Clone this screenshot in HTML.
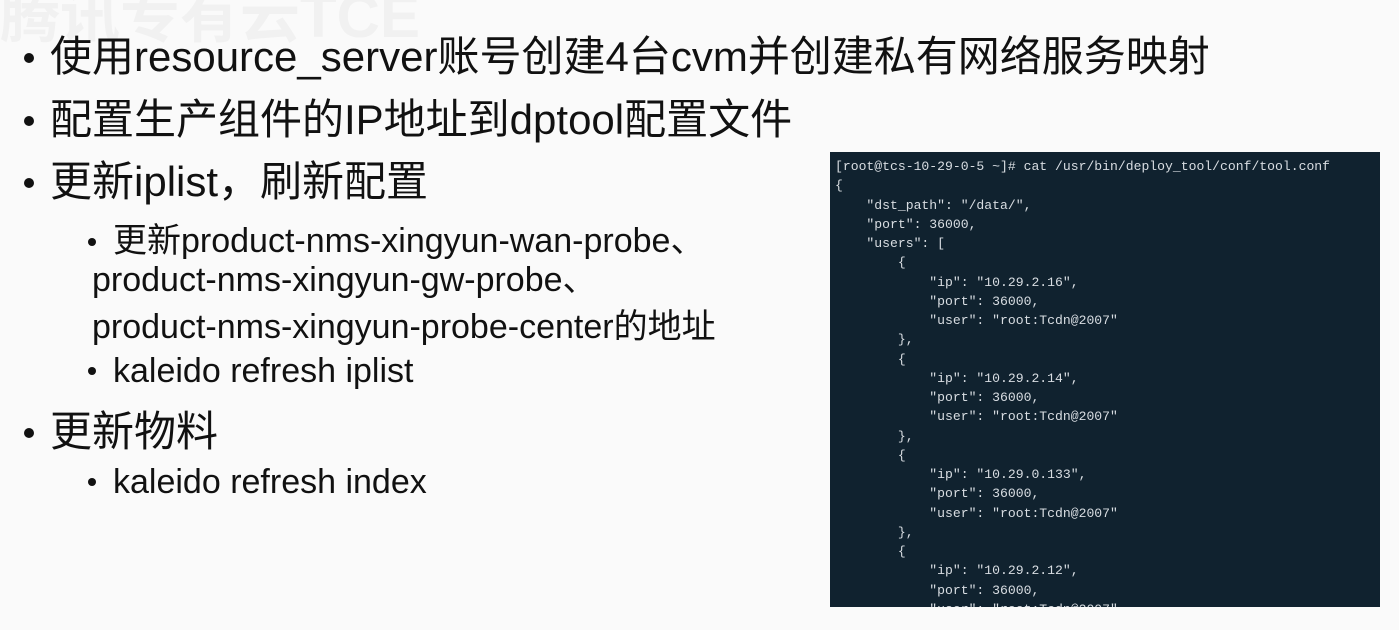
<!DOCTYPE html><html><head><meta charset="utf-8"><style>
body{margin:0;width:1399px;height:630px;background:#fafafa;overflow:hidden;position:relative;font-family:"Liberation Sans","Noto Sans CJK SC",sans-serif;color:#111}
.l{position:absolute;white-space:nowrap;line-height:1}
.m{font-size:42px;left:50px}
.s{font-size:34px}
.b{position:absolute;width:10px;height:10px;border-radius:50%;background:#111}
.sb{position:absolute;width:8px;height:8px;border-radius:50%;background:#111}
.wm{position:absolute;left:0;top:-32px;font-size:60px;color:#f1f1f1;font-weight:bold}
#t{position:absolute;left:830px;top:152px;width:550px;height:455px;background:#10222f;overflow:hidden}
#t pre{margin:0;padding:5px 0 0 5px;font-family:"Liberation Mono","DejaVu Sans Mono",monospace;font-size:13.1px;line-height:19.25px;color:#d8dde2}
</style></head><body>
<div class="wm">腾讯专有云TCE</div>
<div class="b" style="left:24px;top:53px"></div><div class="l m" style="top:36px">使用resource_server账号创建4台cvm并创建私有网络服务映射</div>
<div class="b" style="left:24px;top:116px"></div><div class="l m" style="top:99px">配置生产组件的IP地址到dptool配置文件</div>
<div class="b" style="left:24px;top:178px"></div><div class="l m" style="top:161px">更新iplist，刷新配置</div>
<div class="sb" style="left:88px;top:238px"></div><div class="l s" style="left:113px;top:224px">更新product-nms-xingyun-wan-probe、</div>
<div class="l s" style="left:92px;top:263px">product-nms-xingyun-gw-probe、</div>
<div class="l s" style="left:92px;top:310px">product-nms-xingyun-probe-center的地址</div>
<div class="sb" style="left:88px;top:367px"></div><div class="l s" style="left:113px;top:354px">kaleido refresh iplist</div>
<div class="b" style="left:24px;top:428px"></div><div class="l m" style="top:411px">更新物料</div>
<div class="sb" style="left:88px;top:478px"></div><div class="l s" style="left:113px;top:465px">kaleido refresh index</div>
<div id="t"><pre>[root@tcs-10-29-0-5 ~]# cat /usr/bin/deploy_tool/conf/tool.conf
{
    "dst_path": "/data/",
    "port": 36000,
    "users": [
        {
            "ip": "10.29.2.16",
            "port": 36000,
            "user": "root:Tcdn@2007"
        },
        {
            "ip": "10.29.2.14",
            "port": 36000,
            "user": "root:Tcdn@2007"
        },
        {
            "ip": "10.29.0.133",
            "port": 36000,
            "user": "root:Tcdn@2007"
        },
        {
            "ip": "10.29.2.12",
            "port": 36000,
            "user": "root:Tcdn@2007"</pre></div>
</body></html>
